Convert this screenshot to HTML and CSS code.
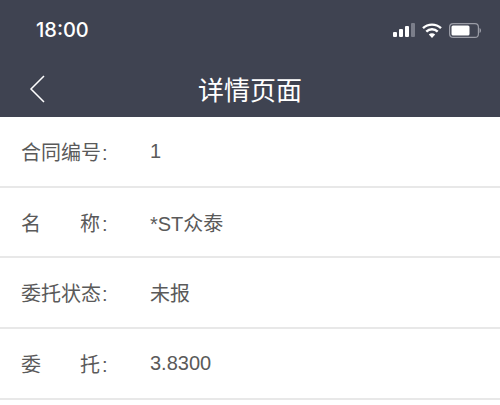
FILE: index.html
```html
<!DOCTYPE html>
<html lang="zh-CN">
<head>
    <meta charset="UTF-8">
    <meta name="viewport" content="width=device-width, initial-scale=1.0">
    <title>详情页面</title>
    <link rel="stylesheet" href="styles.css">
</head>
<body>
    <div class="header">
        <div class="status-bar">
            <span class="time">18:00</span>
            <div class="status-icons">
                <svg class="signal" width="22" height="14" viewBox="0 0 22 14">
                    <rect x="0" y="9" width="4" height="5" rx="1" fill="#fff"/>
                    <rect x="6" y="6" width="4" height="8" rx="1" fill="#fff"/>
                    <rect x="12" y="3" width="4" height="11" rx="1" fill="#fff"/>
                    <rect x="18" y="0" width="4" height="14" rx="1" fill="#7b7e8a"/>
                </svg>
                <svg class="wifi" width="20" height="15" viewBox="0 0 20 15">
                    <path d="M1 5.2a13 13 0 0 1 18 0" fill="none" stroke="#fff" stroke-width="2.4"/>
                    <path d="M4.3 8.6a8.2 8.2 0 0 1 11.4 0" fill="none" stroke="#fff" stroke-width="2.4"/>
                    <path d="M10 15l-3.2-3.5a4.6 4.6 0 0 1 6.4 0z" fill="#fff"/>
                </svg>
                <svg class="battery" width="32" height="15" viewBox="0 0 32 15">
                    <rect x="0.6" y="0.6" width="28.8" height="13.8" rx="3.5" fill="none" stroke="#9a9ca6" stroke-width="1.2"/>
                    <rect x="2.5" y="2.5" width="18" height="10" rx="1.5" fill="#fff"/>
                    <path d="M30.5 5v5a2.6 2.6 0 0 0 1.5-2.5A2.6 2.6 0 0 0 30.5 5z" fill="#9a9ca6"/>
                </svg>
            </div>
        </div>
        <div class="nav-bar">
            <svg class="back" width="16" height="28" viewBox="0 0 16 28">
                <path d="M15 1L2 14l13 13" fill="none" stroke="#fff" stroke-width="1.5"/>
            </svg>
            <div class="title">详情页面</div>
        </div>
    </div>

    <div class="list">
        <div class="row">
            <div class="label"><span class="label-text">合同编号</span><span>:</span></div>
            <div class="value">1</div>
        </div>
        <div class="row">
            <div class="label"><span class="label-text"><span>名</span><span>称</span></span><span>:</span></div>
            <div class="value">*ST众泰</div>
        </div>
        <div class="row">
            <div class="label"><span class="label-text">委托状态</span><span>:</span></div>
            <div class="value">未报</div>
        </div>
        <div class="row">
            <div class="label"><span class="label-text"><span>委</span><span>托</span></span><span>:</span></div>
            <div class="value">3.8300</div>
        </div>
    </div>
</body>
</html>
```

FILE: styles.css
```css
body {
    margin: 0;
    background-color: #fff;
    font-family: "Liberation Sans", "Noto Sans CJK SC", sans-serif;
    overflow: hidden;
}

.header {
    height: 117px;
    background-color: #3f4351;
    color: #fff;
}

.status-bar {
    display: flex;
    justify-content: space-between;
    align-items: center;
    height: 60px;
    padding: 0 20px 0 36px;
}

.time {
    font-family: Inter, sans-serif;
    font-size: 20px;
    font-weight: 500;
}

.status-icons {
    display: flex;
    align-items: center;
    gap: 7px;
    margin-right: -1px;
}

.nav-bar {
    display: grid;
    grid-template-columns: 1fr auto 1fr;
    align-items: center;
    height: 57px;
    padding-left: 29px;
}

.back {
    display: block;
}

.title {
    margin-left: -29px;
    font-size: 26px;
}

.list {
    color: #5a5a5a;
    font-size: 20px;
}

.row {
    display: flex;
    align-items: center;
    box-sizing: border-box;
    height: 70.7px;
    padding-left: 21px;
    border-bottom: 2px solid #e8e8e8;
}

.label {
    display: flex;
    align-items: baseline;
    width: 129px;
}

.label-text {
    display: flex;
    justify-content: space-between;
    width: 79px;
    margin-right: 2px;
    white-space: nowrap;
}
```
